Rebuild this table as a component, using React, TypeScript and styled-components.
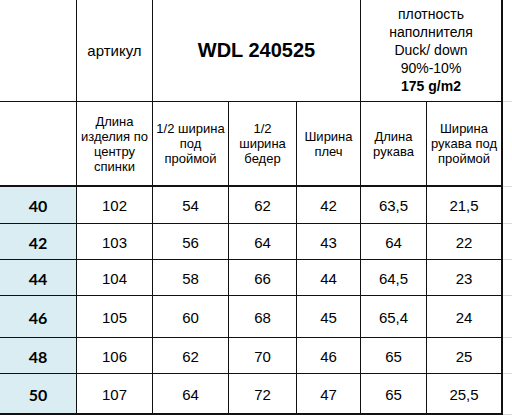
import React from "react"
import styled, { createGlobalStyle } from "styled-components"

const GlobalStyle = createGlobalStyle`
  html, body {
    margin: 0;
    padding: 0;
    background: #ffffff;
  }
  body {
    font-family: "Liberation Sans", Arial, sans-serif;
    color: #000;
  }
`

const COLS = [77, 76, 76, 68, 64, 66, 76, 9]
const ROWS = [102, 85, 37, 36, 36, 42, 36, 41]

const Sheet = styled.div`
  display: grid;
  grid-template-columns: ${COLS.map((c) => `${c}px`).join(" ")};
  grid-template-rows: ${ROWS.map((r) => `${r}px`).join(" ")};
  width: 512px;
  height: 415px;
  overflow: hidden;
`

const Cell = styled.div<{ $span?: number; $last?: boolean; $thick?: boolean; $size?: boolean }>`
  box-sizing: border-box;
  grid-column: span ${(p) => p.$span ?? 1};
  display: flex;
  align-items: center;
  justify-content: center;
  text-align: center;
  border-right: ${(p) => (p.$last ? "2px" : "1px")} solid #111;
  border-bottom: ${(p) => (p.$thick ? "2px" : "1px")} solid #111;
  background: ${(p) => (p.$size ? "#daedf3" : "#ffffff")};
`

const Spare = styled.div<{ $thick?: boolean }>`
  box-sizing: border-box;
  border-bottom: 1px solid #dadada;
`

const Label = styled.span`
  font-size: 15px;
`

const Title = styled.span`
  font-size: 20px;
  font-weight: bold;
`

const Note = styled.div`
  font-size: 14px;
  line-height: 18px;
  padding-bottom: 2px;
`

const Strong = styled.b`
  font-weight: bold;
`

const Head = styled.div`
  font-size: 13px;
  line-height: 15px;
  padding: 0 2px;
`

const Size = styled.span`
  font-family: Lato, "Open Sans", sans-serif;
  font-size: 16px;
  font-weight: bold;
  padding-top: 1px;
`

const Value = styled.span`
  font-size: 15px;
  padding-top: 1px;
`

const heads = [
  ["Длина", "изделия по", "центру", "спинки"],
  ["1/2 ширина", "под", "проймой"],
  ["1/2", "ширина", "бедер"],
  ["Ширина", "плеч"],
  ["Длина", "рукава"],
  ["Ширина", "рукава под", "проймой"],
]

const data: [string, string[]][] = [
  ["40", ["102", "54", "62", "42", "63,5", "21,5"]],
  ["42", ["103", "56", "64", "43", "64", "22"]],
  ["44", ["104", "58", "66", "44", "64,5", "23"]],
  ["46", ["105", "60", "68", "45", "65,4", "24"]],
  ["48", ["106", "62", "70", "46", "65", "25"]],
  ["50", ["107", "64", "72", "47", "65", "25,5"]],
]

const App: React.FC = () => {
  return (
    <>
      <GlobalStyle />
      <Sheet>
        <Cell />
        <Cell>
          <Label>артикул</Label>
        </Cell>
        <Cell $span={3}>
          <Title>WDL 240525</Title>
        </Cell>
        <Cell $span={2} $last>
          <Note>
            плотность
            <br />
            наполнителя
            <br />
            Duck/ down
            <br />
            90%-10%
            <br />
            <Strong>175 g/m2</Strong>
          </Note>
        </Cell>
        <Spare />

        <Cell $thick />
        {heads.map((lines, i) => (
          <Cell key={i} $thick $last={i === heads.length - 1}>
            <Head>
              {lines.map((l, j) => (
                <React.Fragment key={j}>
                  {j > 0 && <br />}
                  {l}
                </React.Fragment>
              ))}
            </Head>
          </Cell>
        ))}
        <Spare />

        {data.map(([size, values], r) => {
          const lastRow = r === data.length - 1
          return (
            <React.Fragment key={size}>
              <Cell $size $thick={lastRow}>
                <Size>{size}</Size>
              </Cell>
              {values.map((v, i) => (
                <Cell key={i} $thick={lastRow} $last={i === values.length - 1}>
                  <Value>{v}</Value>
                </Cell>
              ))}
              <Spare />
            </React.Fragment>
          )
        })}
      </Sheet>
    </>
  )
}

export default App
